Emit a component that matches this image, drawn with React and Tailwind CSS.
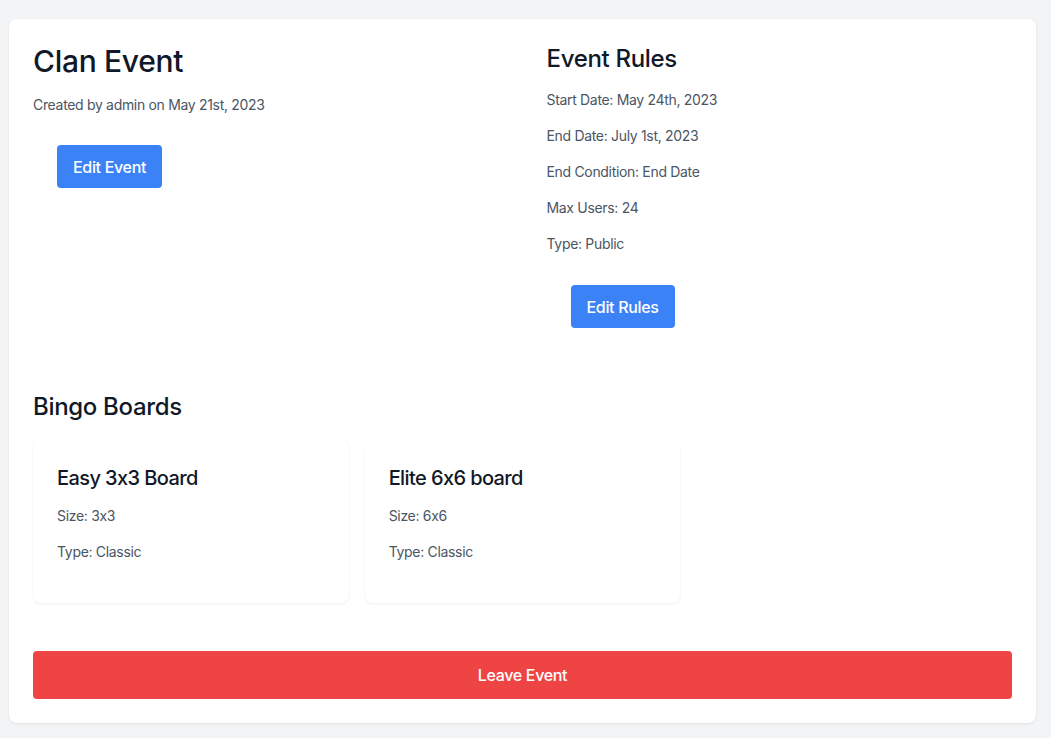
import React from "react";

const rules = [
  "Start Date: May 24th, 2023",
  "End Date: July 1st, 2023",
  "End Condition: End Date",
  "Max Users: 24",
  "Type: Public",
];

const boards = [
  { name: "Easy 3x3 Board", size: "3x3", type: "Classic" },
  { name: "Elite 6x6 board", size: "6x6", type: "Classic" },
];

const BoardCard = ({ board }) => {
  return (
    <div className="bg-white rounded-lg p-6 pb-[41px] shadow-[0_1px_3px_rgba(0,0,0,0.07)]">
      <h3 className="text-xl font-medium text-[#111827] tracking-[-0.03em]">{board.name}</h3>
      <p className="mt-[14px] text-sm text-[#4b5563]">Size: {board.size}</p>
      <p className="mt-4 text-sm text-[#4b5563]">Type: {board.type}</p>
    </div>
  );
};

const App = () => {
  return (
    <div
      className="min-h-screen bg-[#f3f4f6] pt-[19px] pl-[9px] pr-[15px] pb-4 tracking-[-0.02em] [font-feature-settings:'calt'_0]"
      style={{ fontFamily: "Inter, 'Noto Sans', sans-serif" }}
    >
      <div className="bg-white rounded-lg shadow-[0_1px_3px_rgba(0,0,0,0.08)] p-6">
        <div className="grid grid-cols-2 gap-12">
          <div>
            <h1 className="text-3xl font-medium text-[#111827]">Clan Event</h1>
            <p className="mt-4 text-sm text-[#4b5563]">
              Created by admin on May 21st, 2023
            </p>
            <button className="mt-[30px] ml-6 h-[43px] px-4 rounded bg-[#3b82f6] text-white font-medium">
              Edit Event
            </button>
          </div>
          <div>
            <h2 className="text-2xl font-medium text-[#111827]">Event Rules</h2>
            <div className="mt-[15px] space-y-4">
              {rules.map((rule) => (
                <p key={rule} className="text-sm text-[#4b5563]">
                  {rule}
                </p>
              ))}
            </div>
            <button className="mt-[31px] ml-6 h-[43px] px-4 rounded bg-[#3b82f6] text-white font-medium">
              Edit Rules
            </button>
          </div>
        </div>

        <h2 className="mt-[63px] text-2xl font-medium text-[#111827]">Bingo Boards</h2>
        <div className="mt-[17px] grid grid-cols-3 gap-4">
          {boards.map((board) => (
            <BoardCard key={board.name} board={board} />
          ))}
        </div>

        <button className="mt-12 w-full h-12 rounded bg-[#ef4444] text-white font-medium">
          Leave Event
        </button>
      </div>
    </div>
  );
};

export default App;
